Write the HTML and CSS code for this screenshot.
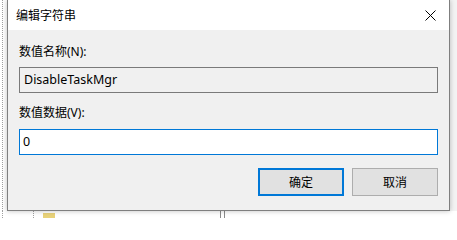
FILE: index.html
```html
<!DOCTYPE html>
<html lang="zh-CN">
<head>
<meta charset="utf-8">
<title>编辑字符串</title>
<link rel="stylesheet" href="styles.css">
</head>
<body>
<div class="desk">
  <div class="left-strip"><span class="dots"></span></div>
  <div class="dialog">
    <div class="titlebar">
      <span class="title">编辑字符串</span>
      <span class="close">
        <svg width="11" height="11" viewBox="0 0 11 11"><path d="M0.5 0.5 L10.5 10.5 M10.5 0.5 L0.5 10.5" stroke="#000" stroke-width="1" fill="none"/></svg>
      </span>
    </div>
    <div class="body">
      <div class="label first">数值名称(N):</div>
      <div class="field readonly">DisableTaskMgr</div>
      <div class="label second">数值数据(V):</div>
      <div class="field active">0</div>
      <div class="buttons">
        <div class="btn default">确定</div>
        <div class="btn">取消</div>
      </div>
    </div>
  </div>
  <div class="right-strip"></div>
</div>
<div class="below">
  <span class="tree-dots d1"></span>
  <span class="tree-dots d2"></span>
  <span class="folder"></span>
  <span class="splitter"></span>
</div>
</body>
</html>
```
FILE: styles.css
```css
html, body {
  margin: 0;
  padding: 0;
  background: #ffffff;
  width: 457px;
  height: 218px;
  overflow: hidden;
  font-family: "Noto Sans", "Noto Sans CJK SC", sans-serif;
  font-size: 12px;
  color: #000;
}
.desk {
  display: flex;
  height: 211px;
}
.left-strip {
  width: 7px;
  background: #ffffff;
  position: relative;
}
.left-strip .dots {
  display: block;
  margin-left: 2px;
  width: 0;
  height: 100%;
  border-left: 1px dotted #a0a0a0;
}
.dialog {
  width: 443px;
  height: 211px;
  box-sizing: border-box;
  border: 1px solid #7f7f7f;
  border-top: none;
  display: flex;
  flex-direction: column;
  background: #f0f0f0;
  box-shadow: 0 0 5px rgba(0,0,0,0.25);
  position: relative;
  z-index: 1;
}
.titlebar {
  height: 30px;
  flex: none;
  background: #ffffff;
  display: flex;
  align-items: center;
  justify-content: space-between;
  padding-left: 8px;
  padding-right: 13px;
}
.title {
  line-height: 16px;
  margin-top: 1px;
}
.close {
  display: flex;
  align-items: center;
  margin-top: 1px;
}
.body {
  flex: 1;
  padding: 14px 10px 0 11px;
  display: flex;
  flex-direction: column;
}
.label {
  line-height: 16px;
  height: 16px;
}
.label.first { margin-bottom: 7px; }
.label.second { margin-top: 12px; margin-bottom: 8px; }
.field {
  height: 26px;
  box-sizing: border-box;
  line-height: 24px;
  padding-left: 4px;
  margin-right: 1px;
  font-size: 12.5px;
}
.field.readonly {
  border: 1px solid #7a7a7a;
  background: #f0f0f0;
  padding-left: 4px;
}
.field.active {
  border: 1px solid #0078d7;
  background: #ffffff;
  padding-left: 3px;
}
.buttons {
  display: flex;
  justify-content: flex-end;
  gap: 8px;
  margin-top: 13px;
  margin-right: 1px;
}
.btn {
  width: 86px;
  height: 28px;
  box-sizing: border-box;
  border: 1px solid #adadad;
  background: #e1e1e1;
  display: flex;
  align-items: center;
  justify-content: center;
}
.btn.default {
  border: 2px solid #0078d7;
}
.right-strip {
  flex: 1;
  background: #f3f3f3;
}
.below {
  height: 7px;
  background: #ffffff;
  display: flex;
  align-items: flex-start;
}
.tree-dots {
  display: block;
  width: 0;
  height: 7px;
  border-left: 1px dotted #a0a0a0;
}
.tree-dots.d1 { margin-left: 2px; }
.tree-dots.d2 { margin-left: 30px; }
.folder {
  display: block;
  width: 12px;
  height: 5px;
  margin-left: 9px;
  margin-top: 2px;
  background: #e8d27a;
}
.splitter {
  display: block;
  width: 3px;
  height: 7px;
  margin-left: 165px;
  border-left: 1px solid #8a8a8a;
  border-right: 1px solid #8a8a8a;
}
```
